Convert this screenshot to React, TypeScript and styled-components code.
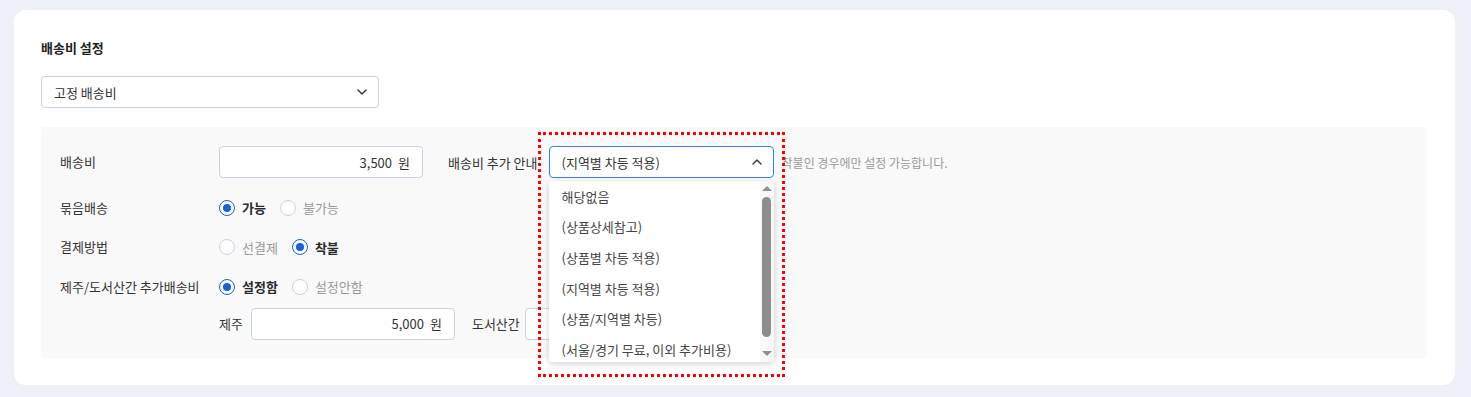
import React from "react";
import styled, { createGlobalStyle } from "styled-components";

const GlobalStyle = createGlobalStyle`
    body {
        margin: 0;
        background: #edf0f7;
        font-family: "Noto Sans CJK KR", "Noto Sans", sans-serif;
        color: #333;
    }
`;

const Page = styled.div`
    padding: 10px 16px 13px 14px;
`;

const Card = styled.div`
    background: #fff;
    border-radius: 12px;
    padding: 28px 28px 27px 27px;
`;

const Title = styled.h3`
    margin: 0;
    font-size: 13px;
    line-height: 20px;
    font-weight: 700;
    color: #222;
`;

const SelectBox = styled.div<{ $width: number; $open?: boolean }>`
    box-sizing: border-box;
    width: ${p => p.$width}px;
    height: 32px;
    display: flex;
    align-items: center;
    justify-content: space-between;
    padding: 0 11px 0 12px;
    background: #fff;
    border: 1px solid ${p => (p.$open ? "#3b7cf0" : "#c8d2e3")};
    border-radius: 4px;
    font-size: 13px;
    color: #333;
`;

const TypeSelect = styled(SelectBox)`
    margin-top: 18px;
`;

const Panel = styled.div`
    margin-top: 19px;
    background: #f9f9fa;
    border-radius: 4px;
    padding: 19px 19px 18px;
    display: flex;
    flex-direction: column;
    gap: 19.5px;
`;

const Row = styled.div<{ $top?: boolean }>`
    display: flex;
    align-items: ${p => (p.$top ? "flex-start" : "center")};
`;

const Label = styled.div`
    width: 159px;
    flex: none;
    font-size: 13px;
    line-height: 20px;
    color: #333;
`;

const Field = styled.div<{ $column?: boolean }>`
    display: flex;
    flex-direction: ${p => (p.$column ? "column" : "row")};
    align-items: ${p => (p.$column ? "flex-start" : "center")};
    gap: ${p => (p.$column ? "11px" : "0")};
`;

const AmountInput = styled.div`
    box-sizing: border-box;
    width: 204px;
    height: 32px;
    display: flex;
    align-items: center;
    justify-content: flex-end;
    gap: 6px;
    padding: 0 12px;
    background: #fff;
    border: 1px solid #c8d2e3;
    border-radius: 4px;
    font-size: 13px;
    color: #333;
`;

const InlineLabel = styled.span<{ $gapLeft: number; $gapRight: number }>`
    margin-left: ${p => p.$gapLeft}px;
    margin-right: ${p => p.$gapRight}px;
    font-size: 13px;
    color: #333;
    white-space: nowrap;
`;

const SelectWrap = styled.div`
    position: relative;
`;

const Highlight = styled.div`
    position: absolute;
    left: -11px;
    top: -14px;
    width: 247px;
    height: 245px;
    box-sizing: border-box;
    border: 3px dotted #f00;
    z-index: 20;
    pointer-events: none;
`;

const Dropdown = styled.div`
    position: absolute;
    left: 0;
    top: 35px;
    width: 225px;
    height: 181px;
    display: flex;
    background: #fff;
    border-radius: 3px;
    box-shadow: 0 2px 6px rgba(0, 0, 0, 0.18);
    overflow: hidden;
    z-index: 10;
`;

const Options = styled.ul`
    flex: 1;
    margin: 0;
    padding: 0;
    list-style: none;
`;

const Option = styled.li`
    height: 30.6px;
    display: flex;
    align-items: center;
    padding-left: 13px;
    font-size: 13px;
    color: #444;
    white-space: nowrap;
`;

const Scrollbar = styled.div`
    width: 14px;
    flex: none;
    display: flex;
    flex-direction: column;
    align-items: center;
    background: #f8f8f8;
    padding: 5px 0 6px;
    box-sizing: border-box;
`;

const Arrow = styled.div<{ $down?: boolean }>`
    width: 0;
    height: 0;
    border-left: 5px solid transparent;
    border-right: 5px solid transparent;
    ${p => (p.$down ? "border-top: 5px solid #8f8f8f;" : "border-bottom: 5px solid #8f8f8f;")}
`;

const Thumb = styled.div`
    width: 9px;
    height: 140px;
    margin: 6px 0 auto;
    border-radius: 5px;
    background: #8d8d8d;
`;

const Help = styled.span`
    margin-left: 8px;
    font-size: 12px;
    color: #999;
    white-space: nowrap;
`;

const Radios = styled.div`
    display: flex;
    align-items: center;
    gap: 14px;
    height: 20px;
`;

const RadioItem = styled.label<{ $checked?: boolean }>`
    display: flex;
    align-items: center;
    gap: 7px;
    font-size: 13px;
    font-weight: ${p => (p.$checked ? 600 : 400)};
    color: ${p => (p.$checked ? "#2a2a2a" : "#9a9a9a")};
`;

const RadioCircle = styled.span<{ $checked?: boolean }>`
    box-sizing: border-box;
    width: 16px;
    height: 16px;
    border-radius: 50%;
    background: #fff;
    border: ${p => (p.$checked ? "1.5px solid #1b5fd9" : "1px solid #c8d2e3")};
    display: flex;
    align-items: center;
    justify-content: center;

    &::after {
        content: "";
        display: ${p => (p.$checked ? "block" : "none")};
        width: 8px;
        height: 8px;
        border-radius: 50%;
        background: #1b5fd9;
    }
`;

function Chevron({ up }: { up?: boolean }) {
    return (
        <svg width="10" height="6" viewBox="0 0 10 6" fill="none">
            <path d={up ? "M1 5L5 1L9 5" : "M1 1L5 5L9 1"} stroke="#333" strokeWidth="1.4" strokeLinecap="round" strokeLinejoin="round" />
        </svg>
    );
}

function Radio({ label, checked }: { label: string; checked?: boolean }) {
    return (
        <RadioItem $checked={checked}>
            <RadioCircle $checked={checked} />
            {label}
        </RadioItem>
    );
}

const options = [
    "해당없음",
    "(상품상세참고)",
    "(상품별 차등 적용)",
    "(지역별 차등 적용)",
    "(상품/지역별 차등)",
    "(서울/경기 무료, 이외 추가비용)",
];

export default function App() {
    return (
        <Page>
            <GlobalStyle />
            <Card>
                <Title>배송비 설정</Title>
                <TypeSelect $width={338}>
                    고정 배송비
                    <Chevron />
                </TypeSelect>
                <Panel>
                    <Row>
                        <Label>배송비</Label>
                        <Field>
                            <AmountInput>
                                <span>3,500</span>
                                <span>원</span>
                            </AmountInput>
                            <InlineLabel $gapLeft={25} $gapRight={11}>배송비 추가 안내</InlineLabel>
                            <SelectWrap>
                                <SelectBox $width={225} $open>
                                    (지역별 차등 적용)
                                    <Chevron up />
                                </SelectBox>
                                <Dropdown>
                                    <Options>
                                        {options.map(o => (
                                            <Option key={o}>{o}</Option>
                                        ))}
                                    </Options>
                                    <Scrollbar>
                                        <Arrow />
                                        <Thumb />
                                        <Arrow $down />
                                    </Scrollbar>
                                </Dropdown>
                                <Highlight />
                            </SelectWrap>
                            <Help>착불인 경우에만 설정 가능합니다.</Help>
                        </Field>
                    </Row>
                    <Row>
                        <Label>묶음배송</Label>
                        <Radios>
                            <Radio label="가능" checked />
                            <Radio label="불가능" />
                        </Radios>
                    </Row>
                    <Row>
                        <Label>결제방법</Label>
                        <Radios>
                            <Radio label="선결제" />
                            <Radio label="착불" checked />
                        </Radios>
                    </Row>
                    <Row $top>
                        <Label>제주/도서산간 추가배송비</Label>
                        <Field $column>
                            <Radios>
                                <Radio label="설정함" checked />
                                <Radio label="설정안함" />
                            </Radios>
                            <Field>
                                <InlineLabel $gapLeft={0} $gapRight={8}>제주</InlineLabel>
                                <AmountInput>
                                    <span>5,000</span>
                                    <span>원</span>
                                </AmountInput>
                                <InlineLabel $gapLeft={17} $gapRight={5}>도서산간</InlineLabel>
                                <AmountInput>
                                    <span>5,000</span>
                                    <span>원</span>
                                </AmountInput>
                            </Field>
                        </Field>
                    </Row>
                </Panel>
            </Card>
        </Page>
    );
}
